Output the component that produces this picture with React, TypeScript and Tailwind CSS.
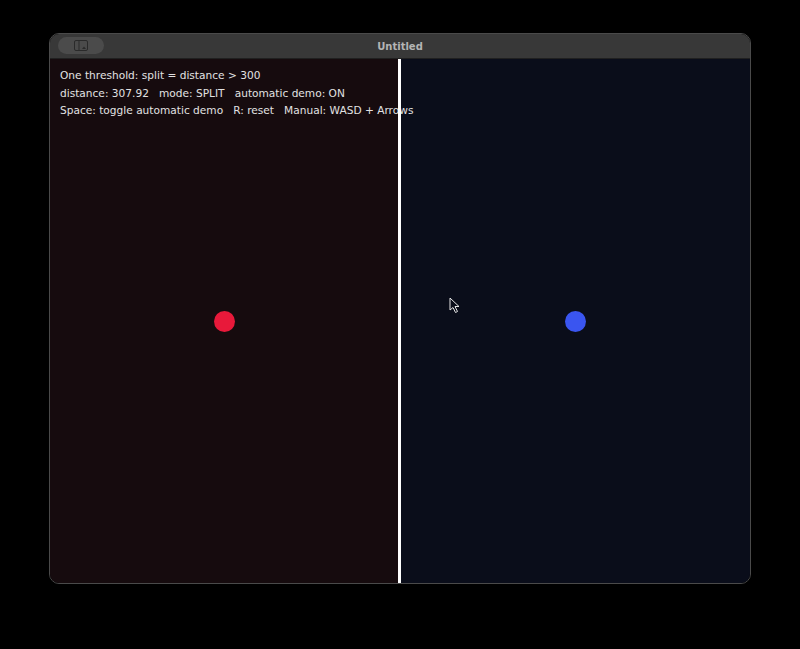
import React from "react";

function SidebarIcon() {
  return (
    <svg width="14" height="11" viewBox="0 0 14 11" fill="none">
      <rect x="0.5" y="0.5" width="13" height="10" rx="1.5" stroke="#2a2a2a" />
      <line x1="5" y1="1" x2="5" y2="10" stroke="#2a2a2a" />
      <path d="M8 9 L10 6.5 L12 9 Z" fill="#2a2a2a" />
    </svg>
  );
}

function Cursor() {
  return (
    <svg width="12" height="17" viewBox="0 0 12 17" className="absolute left-[449px] top-[297px] z-20">
      <path d="M1 1 L1 13 L4 10.5 L6.5 15.5 L8.5 14.5 L6 9.5 L10 9.5 Z" fill="#0a0d1a" stroke="#e5e5e5" strokeWidth="1" strokeLinejoin="round" />
    </svg>
  );
}

export default function App() {
  return (
    <div className="relative w-[800px] h-[649px] bg-black font-['DejaVu_Sans',sans-serif]">
      <div className="absolute left-[49px] top-[33px] w-[702px] h-[551px] rounded-[10px] border border-[#4a4a4a] overflow-hidden flex flex-col">
        {/* title bar */}
        <div className="relative h-[25px] bg-[#383838] border-b border-[#202020] flex items-center justify-center shrink-0">
          <div className="absolute left-[8px] top-[3px] w-[46px] h-[17px] rounded-full bg-[#4b4b4b] flex items-center justify-center">
            <SidebarIcon />
          </div>
          <span className="text-[10px] font-bold text-[#b4b4b4]">Untitled</span>
        </div>

        {/* canvas */}
        <div className="relative flex-1 flex">
          <div className="w-[348px] bg-[#160b0e] flex items-center justify-center">
            <div className="w-[21px] h-[21px] rounded-full bg-[#e8193a]" />
          </div>
          <div className="w-[3px] bg-white z-10" />
          <div className="flex-1 bg-[#0a0d1a] flex items-center justify-center">
            <div className="w-[21px] h-[21px] rounded-full bg-[#3a55f0]" />
          </div>

          <div className="absolute left-[10px] top-[8px] text-[10.6px] leading-[17.5px] text-[#e2e2e2] whitespace-pre">
            <div>One threshold: split = distance &gt; 300</div>
            <div>distance: 307.92   mode: SPLIT   automatic demo: ON</div>
            <div>Space: toggle automatic demo   R: reset   Manual: WASD + Arrows</div>
          </div>
        </div>
      </div>
      <Cursor />
    </div>
  );
}
